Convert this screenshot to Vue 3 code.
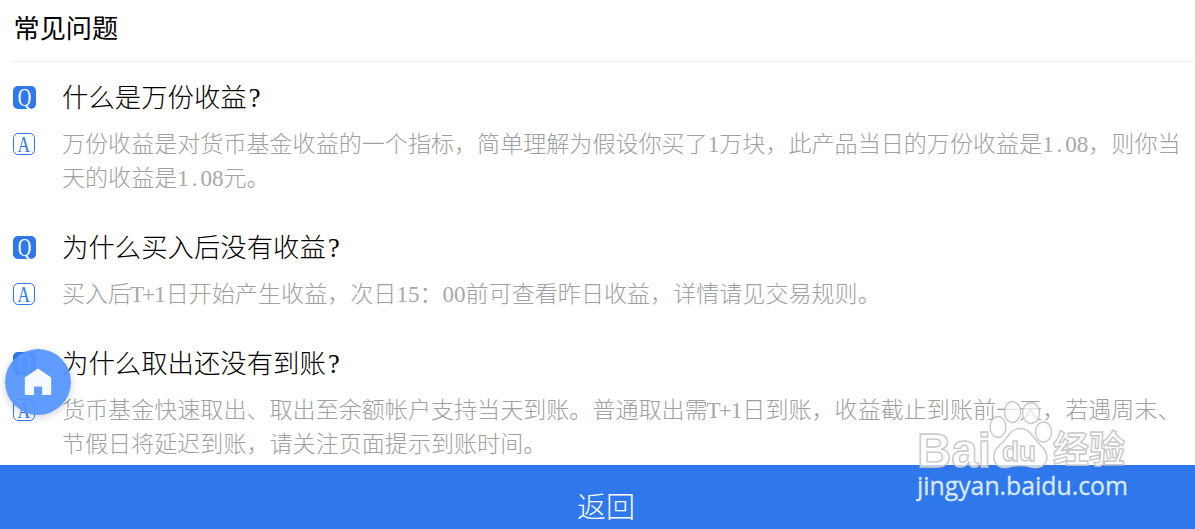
<template>
  <div class="page">
    <h1 class="title">常见问题</h1>

    <div class="faq">
      <div v-for="item in faqs" :key="item.q" class="item">
        <div class="row">
          <span class="badge badge-q"><span class="letter">Q</span></span>
          <div class="question">{{ item.q }}<span class="mark">?</span></div>
        </div>
        <div class="row row-answer">
          <span class="badge badge-a"><span class="letter">A</span></span>
          <div class="answer">
            <div v-for="line in item.a" :key="line" class="line">
              <template v-for="(part, i) in split(line)" :key="i"><span v-if="part.half" class="half">{{ part.text }}</span><template v-else>{{ part.text }}</template></template>
            </div>
          </div>
        </div>
      </div>
    </div>

    <button class="back">返回</button>

    <a class="home">
      <svg width="28" height="28" viewBox="0 0 28 28">
        <path d="M14 0.600 L27.200 9.500 V26.200 Q27.200 27 26.400 27 H18.200 V19.500 Q18.200 18.500 17.200 18.500 H11 Q10 18.500 10 19.500 V27 H1.600 Q0.800 27 0.800 26.200 V9.500 Z" fill="#f6f9ff" />
      </svg>
    </a>

    <svg class="watermark" width="220" height="110" viewBox="0 0 220 110">
      <g class="outline">
        <text x="1" y="67" class="wm-logo" textLength="74" lengthAdjust="spacingAndGlyphs">Bai</text>
        <ellipse cx="82" cy="27" rx="8" ry="10.500" />
        <ellipse cx="96.500" cy="12" rx="8" ry="10.500" />
        <ellipse cx="115" cy="13" rx="8.500" ry="10.500" />
        <ellipse cx="127.500" cy="32" rx="8" ry="10" />
        <path d="M104 28.500C96 28.500 93 35 88 41C82 47 77 50 78 59C79 66 86 69 93 67C101 65 107 65 115 67C123 69 131 66 131 57C131 50 125 46 120 40C115 34 112 28.500 104 28.500Z" />
        <text x="86" y="61" class="wm-du" textLength="34" lengthAdjust="spacingAndGlyphs">du</text>
        <text x="137" y="63" class="wm-cn" textLength="72" lengthAdjust="spacingAndGlyphs">经验</text>
      </g>
      <text x="1" y="95" class="wm-url" textLength="211" lengthAdjust="spacingAndGlyphs">jingyan.baidu.com</text>
    </svg>
  </div>
</template>

<script setup>
const faqs = [
  {
    q: '什么是万份收益',
    a: [
      '万份收益是对货币基金收益的一个指标，简单理解为假设你买了1万块，此产品当日的万份收益是1.08，则你当',
      '天的收益是1.08元。',
    ],
  },
  {
    q: '为什么买入后没有收益',
    a: ['买入后T+1日开始产生收益，次日15：00前可查看昨日收益，详情请见交易规则。'],
  },
  {
    q: '为什么取出还没有到账',
    a: [
      '货币基金快速取出、取出至余额帐户支持当天到账。普通取出需T+1日到账，收益截止到账前一天，若遇周末、',
      '节假日将延迟到账，请关注页面提示到账时间。',
    ],
  },
]

// Latin characters take half of a CJK cell each
function split(line) {
  return (line.match(/[\x20-\x7e]|[^\x20-\x7e]+/g) || []).map((text) => ({
    text,
    half: /^[\x20-\x7e]$/.test(text),
  }))
}
</script>

<style>
body { background: #fff; overflow: hidden; }
</style>

<style scoped>
.page {
  position: relative;
  height: 529px; overflow: hidden;
  display: flex; flex-direction: column;
  font-family: 'Noto Sans CJK SC', sans-serif; color: #000;
}
.title {
  margin: 0 0 0 12px; padding-left: 1.5px;
  height: 61px; line-height: 55px; flex-shrink: 0;
  border-bottom: 1px solid #f1f1f1;
  font-size: 26.2px; font-weight: 400;
}

.faq {
  flex: 1; min-height: 0; padding: 17px 0 0 13px;
  display: flex; flex-direction: column; gap: 36px;
}
.row { display: flex; align-items: flex-start; }
.row-answer { margin-top: 12px; }
.badge {
  box-sizing: border-box; flex-shrink: 0;
  display: flex; justify-content: center;
  border-radius: 5px;
  font-family: 'Liberation Serif', serif;
}
.badge-q {
  width: 23px; height: 23px; margin: 7px 26px 0 0;
  background: #2e78eb; color: #fff; font-size: 26px; line-height: 24px;
}
.badge-a {
  width: 22px; height: 22px; margin: 8px 27px 0 0;
  border: 1px solid #2e78eb; color: #2e78eb; font-size: 24px; line-height: 21px;
}
.letter { display: block; transform: scaleX(0.72); }
.question {
  height: 34px; line-height: 34px; font-size: 26.4px; font-weight: 300; white-space: nowrap;
}
.mark { font-family: 'Liberation Serif', serif; margin-left: 2px; }
.answer { font-size: 23.07px; font-weight: 300; color: #a0a0a0; }
.line { height: 34px; line-height: 34px; white-space: nowrap; }
.half {
  display: inline-flex; justify-content: center; width: 0.5em; line-height: 1;
  font-family: 'Liberation Serif', serif; color: #a8a8a8;
}

.back {
  height: 64px; flex-shrink: 0; border: 0; padding: 15px 0 0 17px;
  background: #2e78eb; color: #fff;
  font-family: inherit; font-size: 29px; font-weight: 300; line-height: 46px;
}

.home {
  position: absolute; left: 5px; top: 349px;
  width: 66px; height: 66px; border-radius: 50%;
  display: flex; align-items: center; justify-content: center;
  background: rgba(86, 149, 255, 0.94);
  box-shadow: 0 2px 8px rgba(0, 0, 0, 0.18);
}
.home svg { margin-top: -1px; }

.watermark { position: absolute; left: 916px; top: 400px; }
.outline { fill: rgba(255, 255, 255, 0.7); stroke: #c8c8c8; stroke-width: 1.4; }
.wm-logo { font: bold 48px 'Liberation Sans', sans-serif; }
.wm-du { font: bold 28px 'Liberation Sans', sans-serif; fill: #fff; }
.wm-cn { font: bold 37px 'Noto Sans CJK SC', sans-serif; fill: #fff; }
.wm-url { font: 25px 'Open Sans', sans-serif; fill: #dbe8fd; stroke: #dbe8fd; stroke-width: 0.3; }
</style>
